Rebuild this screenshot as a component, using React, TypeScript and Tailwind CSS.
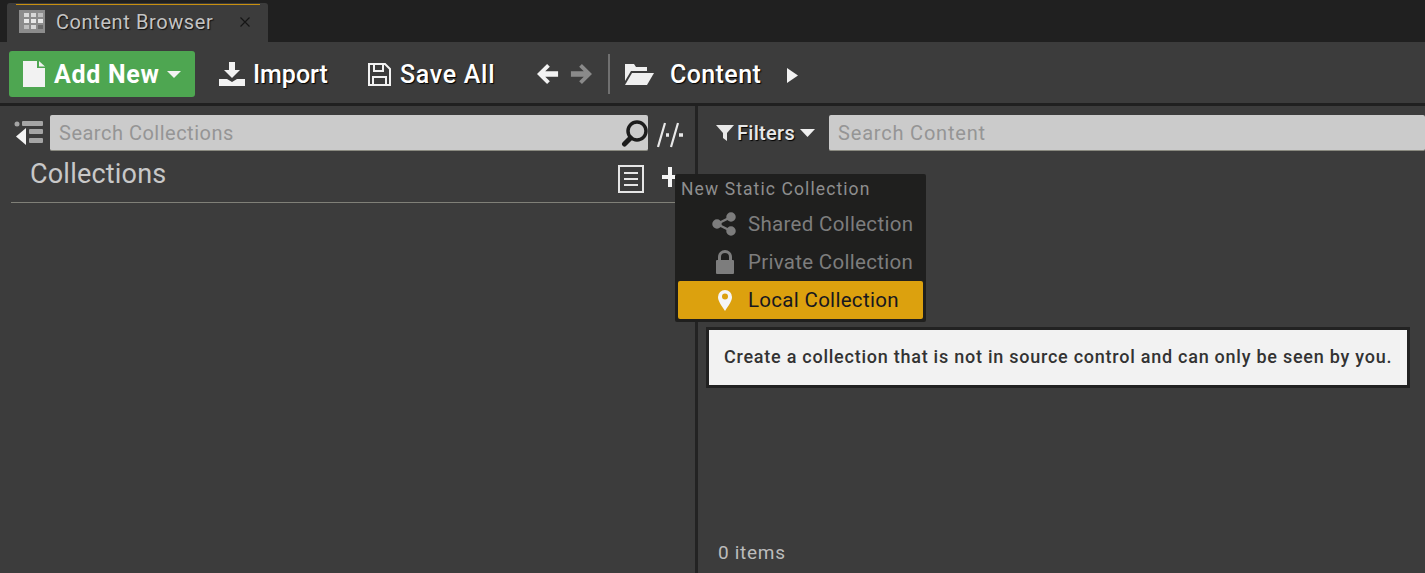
const Tab = () => (
  <div className="h-[42px] bg-[#202020] pl-[7px] pt-[3px] flex">
    <div className="relative w-[261px] h-[39px] bg-[#3c3c3c] rounded-t-[3px] flex items-center pl-[11px] pb-[1px]">
      <div className="absolute top-[1px] left-[9px] w-[244px] h-[1px] bg-[#c9900f]" />
      <svg width="30" height="26" viewBox="0 0 30 26" className="mr-[8px]">
        <rect x="1" y="1" width="26" height="23" fill="#8c8c8c" />
        <rect x="6" y="4" width="5" height="4" fill="#d8d8d8" />
        <rect x="13" y="4" width="5" height="4" fill="#d8d8d8" />
        <rect x="20" y="4" width="5" height="4" fill="#bdbdbd" />
        <rect x="6" y="10" width="5" height="4" fill="#e8e8e8" />
        <rect x="13" y="10" width="5" height="4" fill="#e8e8e8" />
        <rect x="20" y="10" width="5" height="4" fill="#e8e8e8" />
        <rect x="6" y="16" width="5" height="4" fill="#bdbdbd" />
        <rect x="13" y="16" width="5" height="4" fill="#d8d8d8" />
        <rect x="20" y="16" width="5" height="4" fill="#6a6a6a" />
      </svg>
      <span className="w-[184px] text-[20px] tracking-[0.6px] leading-none text-[#c4c4c4] [text-shadow:1px_1px_1px_#111]">Content Browser</span>
      <svg width="10" height="10" viewBox="0 0 10 10" stroke="#151515" strokeWidth="1.2">
        <path d="M0.5 0.5 9.5 9.5M9.5 0.5 0.5 9.5" />
      </svg>
    </div>
  </div>
)

const Toolbar = () => (
  <div className="h-[64px] bg-[#3c3c3c] border-b-[3px] border-[#202020] flex items-center pl-[9px] pt-[3px] text-white font-medium [text-shadow:1px_1px_1px_#000]">
    <button className="w-[186px] h-[46px] rounded-[3px] bg-[#4ea651] flex items-center pl-[13px] text-[25px] font-bold">
      <svg width="24" height="28" viewBox="0 0 24 28" className="mr-[8px]" fill="#f2f2f2">
        <path d="M1 1H15V8H23V27H1Z" />
        <path d="M17 1 23 6.5H17Z" />
      </svg>
      <span className="leading-none w-[106px] text-left tracking-[0.7px] whitespace-nowrap">Add New</span>
      <svg width="14" height="8" viewBox="0 0 14 8" fill="#f2f2f2" className="ml-[7px] mt-[2px]">
        <path d="M0 0H14L7 7Z" />
      </svg>
    </button>
    <svg width="26" height="24" viewBox="0 0 26 24" fill="#f2f2f2" className="ml-[24px] mr-[8px]">
      <path d="M10 0H16V8H21L13 16 5 8H10Z" />
      <path d="M0 17H8L13 20 18 17H26V24H0Z" />
    </svg>
    <span className="w-[75px] text-[25px] leading-none">Import</span>
    <svg width="24" height="24" viewBox="0 0 24 24" fill="none" stroke="#f2f2f2" strokeWidth="2" className="ml-[39px] mr-[9px]">
      <path d="M2 2H18L23 7V23H2Z" />
      <path d="M7 2V9H16V2M6 23V15H19V23" />
    </svg>
    <span className="w-[95px] text-[25px] tracking-[0.7px] leading-none whitespace-nowrap">Save All</span>
    <svg width="22" height="22" viewBox="0 0 24 22" fill="#f2f2f2" className="ml-[42px]">
      <path d="M11 0 14 3 9 8H23V14H9L14 19 11 22 0 11Z" />
    </svg>
    <svg width="22" height="22" viewBox="0 0 24 22" fill="#8a8a8a" className="ml-[11px]">
      <path d="M13 0 10 3 15 8H1V14H15L10 19 13 22 24 11Z" />
    </svg>
    <div className="ml-[16px] w-[2px] h-[40px] bg-[#707070]" />
    <svg width="30" height="24" viewBox="0 0 30 24" fill="#efefef" className="ml-[14px]">
      <path d="M1 2H10L12 5H23V9H7L1 19Z" />
      <path d="M8 11H30L23 23H1Z" />
    </svg>
    <span className="ml-[16px] w-[91px] text-[25px] tracking-[0.4px] leading-none">Content</span>
    <svg width="11" height="15" viewBox="0 0 11 15" fill="#f2f2f2" className="ml-[26px] mt-[2px]">
      <path d="M0 0 11 7.5 0 15Z" />
    </svg>
  </div>
)

const SearchBox = ({ text, className }: { text: string; className: string }) => (
  <div className={`h-[36px] bg-[#cbcbcb] border-b border-[#8a8a80] rounded-[2px] flex items-center pl-[9px] text-[20px] text-[#959595] ${className}`}>
    <span className="flex-1 leading-none">{text}</span>
  </div>
)

const CollectionsPanel = () => (
  <div className="w-[695px] shrink-0 flex flex-col">
    <div className="flex items-center h-[36px] mt-[9px]">
      <svg width="30" height="26" viewBox="0 0 30 26" className="ml-[14px] mr-[6px]">
        <circle cx="3" cy="4" r="2.5" fill="#a5a5a5" />
        <rect x="8" y="1" width="21" height="5" rx="1" fill="#a5a5a5" />
        <rect x="15" y="9" width="14" height="5" rx="1" fill="#a5a5a5" />
        <rect x="15" y="18" width="14" height="5" rx="1" fill="#a5a5a5" />
        <path d="M12 8V25L2 16.5Z" fill="#f4f4f4" />
      </svg>
      <div className="relative w-[598px]">
        <SearchBox text="Search Collections" className="w-full tracking-[0.5px]" />
        <svg width="28" height="28" viewBox="0 0 28 28" fill="none" className="absolute right-[-1px] top-[4px]">
          <circle cx="16" cy="12" r="9" stroke="#1c1c1c" strokeWidth="3.5" />
          <path d="M9.5 19 3.5 25" stroke="#1c1c1c" strokeWidth="5" strokeLinecap="round" />
        </svg>
      </div>
      <svg width="28" height="30" viewBox="0 0 28 30" fill="none" stroke="#e8e8e8" strokeWidth="2.2" className="ml-[9px] mt-[4px]">
        <path d="M8 3 1 27M21 3 14 27" />
        <path d="M9 15H12M22 15H26" strokeWidth="3.5" />
      </svg>
    </div>
    <div className="flex items-center h-[51px] ml-[30px] mr-[18px]">
      <span className="flex-1 text-[27px] tracking-[0.2px] leading-none text-[#c8c8c8] pb-[4px]">Collections</span>
      <svg width="26" height="28" viewBox="0 0 26 28" fill="none" stroke="#e6e6e6" strokeWidth="2" className="mr-[18px] mt-[4px]">
        <rect x="1" y="1" width="24" height="26" />
        <path d="M6 8H20M6 14H20M6 20H20" />
      </svg>
      <svg width="16" height="20" viewBox="0 0 16 20" fill="#f4f4f4" className="mr-[-1px]">
        <path d="M6 0H10V8H16V12H10V20H6V12H0V8H6Z" />
      </svg>
    </div>
    <div className="ml-[11px] w-[666px] h-[1px] bg-[#808078]" />
  </div>
)

const ContentPanel = () => (
  <div className="flex-1 flex flex-col border-l-[3px] border-[#232323]">
    <div className="flex items-center h-[36px] mt-[9px] pl-[18px] text-[#e8e8e8] [text-shadow:1px_1px_1px_#000]">
      <svg width="18" height="18" viewBox="0 0 18 18" fill="#e8e8e8">
        <path d="M0 1H18L11 9V17L7 14V9Z" />
      </svg>
      <span className="ml-[3px] text-[20px] tracking-[0.3px] leading-none font-medium">Filters</span>
      <svg width="15" height="8" viewBox="0 0 15 8" fill="#efefef" className="ml-[5px]">
        <path d="M0 0H15L7.5 8Z" />
      </svg>
      <SearchBox text="Search Content" className="flex-1 ml-[14px] tracking-[0.8px] [text-shadow:none]" />
    </div>
    <div className="flex-1" />
    <div className="h-[30px] pl-[20px] text-[19px] tracking-[0.7px] text-[#bcbcbc] leading-none">0 items</div>
  </div>
)

const MenuRow = ({ label, icon, active }: { label: string; icon: React.ReactNode; active?: boolean }) => (
  <div className={`h-[38px] flex items-center rounded-[2px] ${active ? "bg-[#dca10e] text-[#17171f]" : "text-[#7d7d7d]"}`}>
    <div className="w-[70px] pr-[12px] flex justify-end">{icon}</div>
    <span className="text-[20.5px] tracking-[0.3px] leading-none">{label}</span>
  </div>
)

const NewCollectionMenu = () => (
  <div className="absolute left-[675px] top-[174px] w-[251px] h-[148px] bg-[#1f1f1e] rounded-[2px] px-[3px] pt-[5px] pb-[3px] flex flex-col">
    <div className="h-[21px] pl-[3px] text-[17.5px] tracking-[1.1px] leading-[21px] text-[#8e8e8e] whitespace-nowrap">New Static Collection</div>
    <div className="flex-1 flex flex-col justify-end">
      <MenuRow
        label="Shared Collection"
        icon={
          <svg width="24" height="24" viewBox="0 0 24 24" fill="#7d7d7d" stroke="#7d7d7d" strokeWidth="2.5">
            <circle cx="5" cy="12" r="3.5" />
            <circle cx="19" cy="5" r="3.5" />
            <circle cx="19" cy="19" r="3.5" />
            <path d="M5 12 19 5M5 12 19 19" fill="none" />
          </svg>
        }
      />
      <MenuRow
        label="Private Collection"
        icon={
          <svg width="20" height="24" viewBox="0 0 20 24" fill="#7d7d7d" className="mr-[1px]">
            <path d="M3 11V7A7 7 0 0 1 17 7V11H14V7A4 4 0 0 0 6 7V11Z" />
            <rect x="1" y="10" width="18" height="14" rx="1" />
          </svg>
        }
      />
      <MenuRow
        label="Local Collection"
        active
        icon={
          <svg width="16" height="22" viewBox="0 0 16 22" className="mr-[3px]">
            <path d="M8 22C4 16 1 12 1 8A7 7 0 0 1 15 8C15 12 12 16 8 22Z" fill="#f5f5f5" />
            <circle cx="8" cy="7.5" r="3" fill="#dca10e" />
          </svg>
        }
      />
    </div>
  </div>
)

const Tooltip = () => (
  <div className="absolute left-[706px] top-[327px] w-[704px] h-[61px] bg-[#f2f2f2] border-[3px] border-[#222222] flex items-center pl-[15px] pb-[2px]">
    <span className="text-[18px] tracking-[0.75px] leading-none text-[#333333] font-medium whitespace-nowrap">Create a collection that is not in source control and can only be seen by you.</span>
  </div>
)

export default function App() {
  return (
    <div className="relative w-[1425px] h-[573px] overflow-hidden bg-[#3c3c3c] flex flex-col font-['Roboto',sans-serif]">
      <Tab />
      <Toolbar />
      <div className="flex-1 flex">
        <CollectionsPanel />
        <ContentPanel />
      </div>
      <NewCollectionMenu />
      <Tooltip />
    </div>
  )
}
